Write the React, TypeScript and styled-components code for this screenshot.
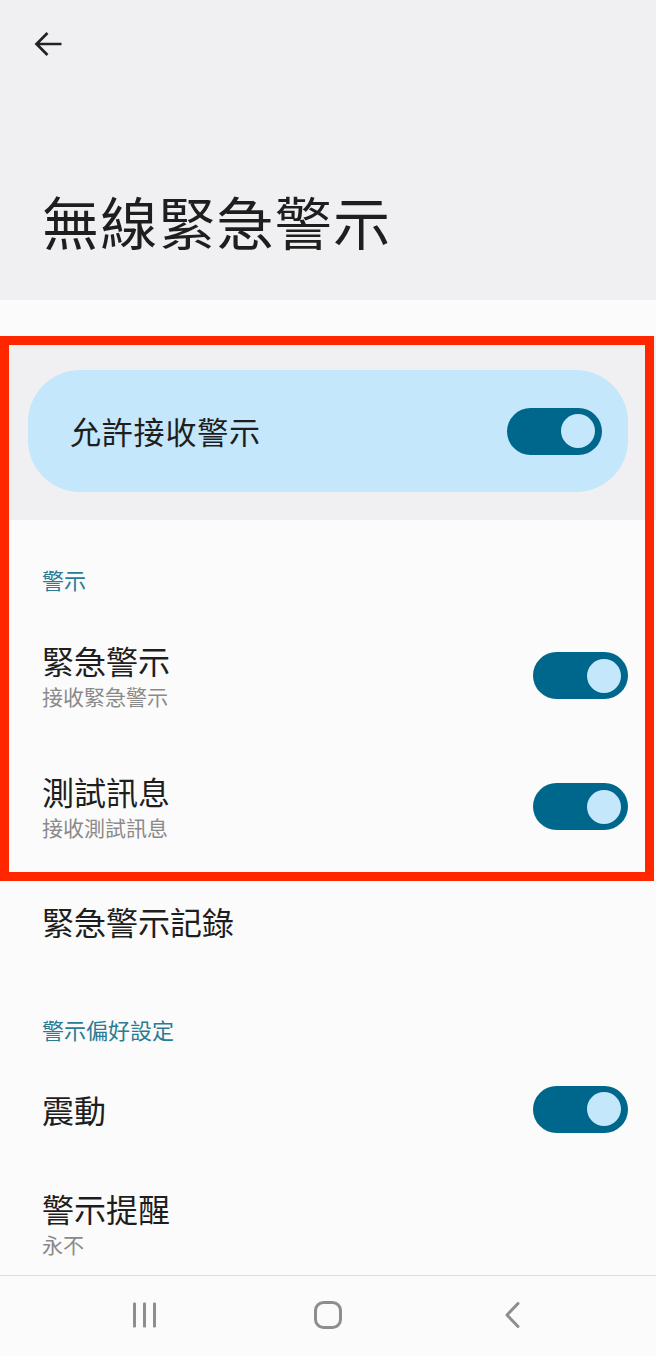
import React from "react";
import styled, { createGlobalStyle } from "styled-components";

const GlobalStyle = createGlobalStyle`
  html, body {
    margin: 0;
    padding: 0;
    background: #fbfbfb;
  }
  body {
    font-family: "Noto Sans CJK TC", "Noto Sans", sans-serif;
    -webkit-font-smoothing: antialiased;
  }
  * { box-sizing: border-box; }
`;

const Page = styled.div`
  width: 656px;
  height: 1356px;
  display: flex;
  flex-direction: column;
  overflow: hidden;
  background: #fbfbfb;
`;

const Header = styled.header`
  flex-shrink: 0;
  height: 300px;
  background: #f0f0f2;
  display: flex;
  flex-direction: column;
  align-items: flex-start;
  padding: 31px 0 0 34px;
`;

const BackButton = styled.button`
  border: 0;
  padding: 0;
  margin: 0;
  background: transparent;
  width: 28px;
  height: 26px;
  display: flex;
  cursor: pointer;
`;

const Title = styled.h1`
  margin: 135px 0 0 8px;
  font-size: 57px;
  line-height: 57px;
  font-weight: 400;
  color: #1e1e1e;
  letter-spacing: 1.2px;
`;

const Content = styled.main`
  flex: 1;
  overflow: hidden;
  padding-top: 36px;
  background: #fbfbfb;
`;

const HighlightFrame = styled.section`
  position: relative;
  &::after {
    content: "";
    position: absolute;
    top: 0;
    left: 0;
    right: 2px;
    bottom: -9px;
    border: 9px solid #ff2600;
    pointer-events: none;
    z-index: 2;
  }
`;

const MasterSection = styled.div`
  background: #f0f0f2;
  padding: 34px 28px 28px 28px;
`;

const MasterCard = styled.div`
  height: 122px;
  border-radius: 52px;
  background: #c4e7fb;
  display: flex;
  align-items: center;
  justify-content: space-between;
  padding: 0 26px 0 42px;
`;

const MasterLabel = styled.span`
  font-size: 31px;
  line-height: 40px;
  color: #1e1e1e;
  letter-spacing: 0.8px;
`;

const SectionHeader = styled.h2`
  margin: 0;
  height: 90px;
  padding: 44px 0 0 42px;
  font-size: 22px;
  line-height: 30px;
  font-weight: 400;
  color: #2a7c96;
`;

const Item = styled.div<{ $tall?: boolean }>`
  height: ${(p) => (p.$tall ? 131 : 98)}px;
  display: flex;
  align-items: center;
  justify-content: space-between;
  padding: 0 28px 0 42px;
`;

const ItemText = styled.div`
  display: flex;
  flex-direction: column;
`;

const ItemTitle = styled.span`
  font-size: 32px;
  line-height: 40px;
  color: #1e1e1e;
`;

const ItemSubtitle = styled.span`
  font-size: 21px;
  line-height: 32px;
  color: #8a8a8a;
`;

const Track = styled.div<{ $on: boolean }>`
  width: 95px;
  height: 47px;
  border-radius: 24px;
  background: ${(p) => (p.$on ? "#00678c" : "#9a9a9a")};
  display: flex;
  align-items: center;
  justify-content: ${(p) => (p.$on ? "flex-end" : "flex-start")};
  padding: 0 7px;
  flex-shrink: 0;
`;

const Thumb = styled.div`
  width: 34px;
  height: 34px;
  border-radius: 50%;
  background: #c4e7fb;
`;

const NavBar = styled.nav`
  flex-shrink: 0;
  height: 81px;
  border-top: 1px solid #dcdcdc;
  background: #fbfbfb;
  display: flex;
  justify-content: center;
  align-items: center;
  padding-bottom: 2px;
`;

const NavSlot = styled.div`
  width: 184px;
  height: 30px;
  display: flex;
  align-items: center;
  justify-content: center;
`;

const Toggle = ({ on }: { on: boolean }) => (
  <Track $on={on}>
    <Thumb />
  </Track>
);

export default function App() {
  return (
    <>
      <GlobalStyle />
      <Page>
        <Header>
          <BackButton aria-label="返回">
            <svg width="28" height="26" viewBox="0 0 28 26" fill="none">
              <path
                d="M27.5 13H2.5M13.5 2L2.5 13L13.5 24"
                stroke="#222"
                strokeWidth="2.7"
                strokeLinejoin="miter"
              />
            </svg>
          </BackButton>
          <Title>無線緊急警示</Title>
        </Header>
        <Content>
          <HighlightFrame>
            <MasterSection>
              <MasterCard>
                <MasterLabel>允許接收警示</MasterLabel>
                <Toggle on />
              </MasterCard>
            </MasterSection>
            <SectionHeader>警示</SectionHeader>
            <Item $tall>
              <ItemText>
                <ItemTitle>緊急警示</ItemTitle>
                <ItemSubtitle>接收緊急警示</ItemSubtitle>
              </ItemText>
              <Toggle on />
            </Item>
            <Item $tall>
              <ItemText>
                <ItemTitle>測試訊息</ItemTitle>
                <ItemSubtitle>接收測試訊息</ItemSubtitle>
              </ItemText>
              <Toggle on />
            </Item>
          </HighlightFrame>
          <Item>
            <ItemText>
              <ItemTitle>緊急警示記錄</ItemTitle>
            </ItemText>
          </Item>
          <SectionHeader>警示偏好設定</SectionHeader>
          <Item>
            <ItemText>
              <ItemTitle>震動</ItemTitle>
            </ItemText>
            <Toggle on />
          </Item>
          <Item $tall>
            <ItemText>
              <ItemTitle>警示提醒</ItemTitle>
              <ItemSubtitle>永不</ItemSubtitle>
            </ItemText>
          </Item>
        </Content>
        <NavBar>
          <NavSlot>
            <svg width="26" height="26" viewBox="0 0 26 26">
              <rect x="2" y="0.5" width="3" height="25" rx="1" fill="#8e8e8e" />
              <rect x="12" y="0.5" width="3" height="25" rx="1" fill="#8e8e8e" />
              <rect x="22" y="0.5" width="3" height="25" rx="1" fill="#8e8e8e" />
            </svg>
          </NavSlot>
          <NavSlot>
            <svg width="28" height="28" viewBox="0 0 28 28" fill="none">
              <rect x="1.5" y="1.5" width="25" height="25" rx="8" stroke="#8e8e8e" strokeWidth="3" />
            </svg>
          </NavSlot>
          <NavSlot>
            <svg width="18" height="26" viewBox="0 0 18 26" fill="none">
              <path d="M15 1.5L4 13L15 24.5" stroke="#8e8e8e" strokeWidth="3" strokeLinecap="round" strokeLinejoin="round" />
            </svg>
          </NavSlot>
        </NavBar>
      </Page>
    </>
  );
}
